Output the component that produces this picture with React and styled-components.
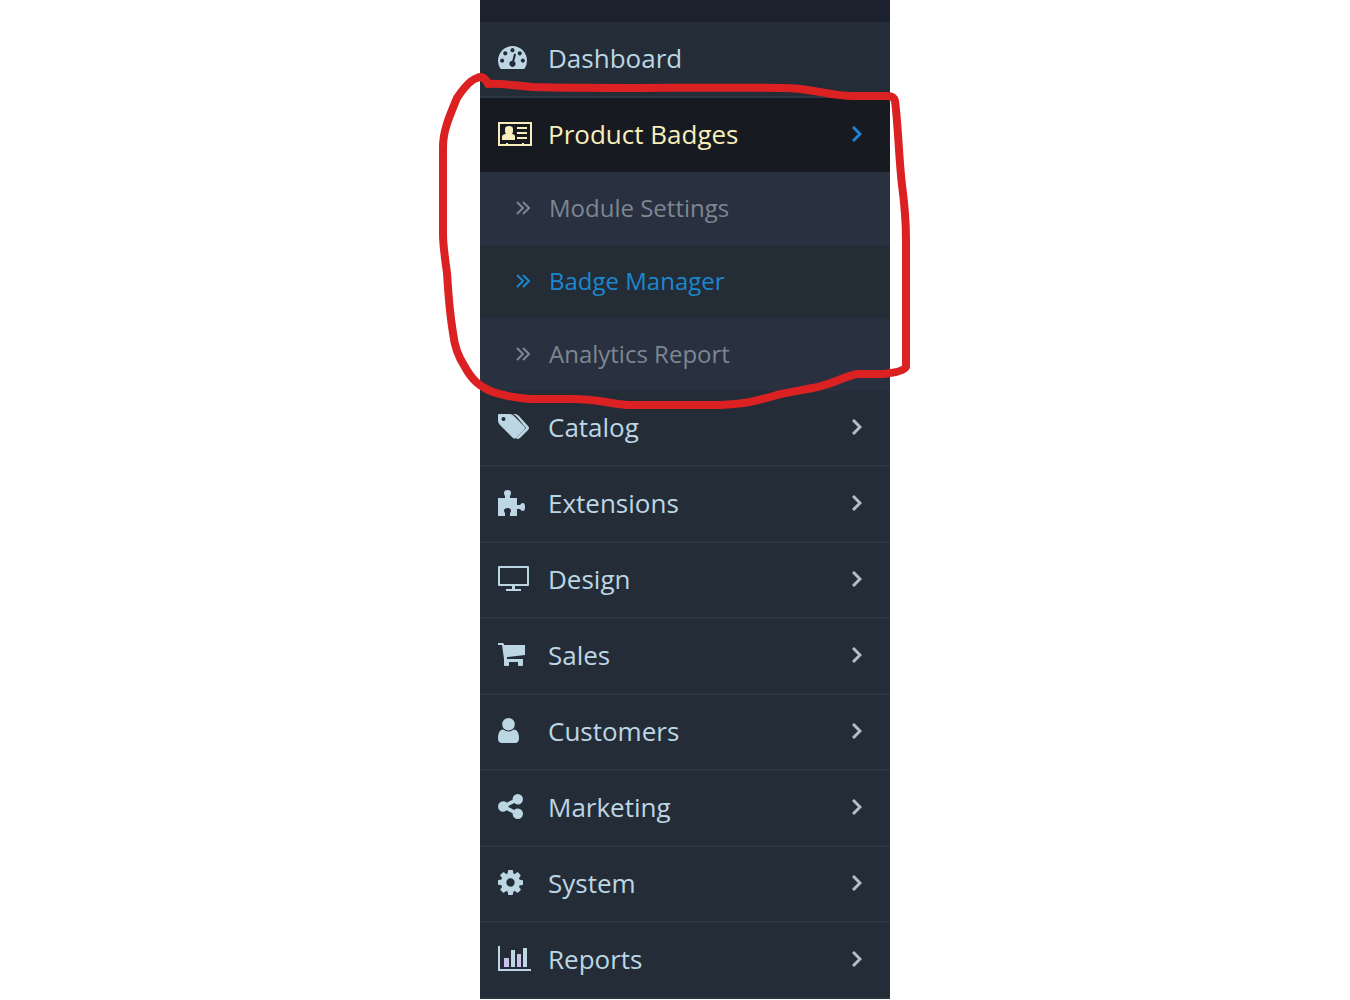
import React from 'react';
import styled, { createGlobalStyle } from 'styled-components';

const GlobalStyle = createGlobalStyle`
  * {
    box-sizing: border-box;
  }

  body {
    margin: 0;
    background: #ffffff;
    font-family: 'Open Sans', sans-serif;
  }
`;

// Icons
const icons = {
  dashboard: {
    box: '0 256 1792 1408',
    width: 29,
    height: 23,
    shape: (
      <path d="M384 1152q0-53-37.5-90.5t-90.5-37.5-90.5 37.5-37.5 90.5 37.5 90.5 90.5 37.5 90.5-37.5 37.5-90.5zm192-448q0-53-37.5-90.5t-90.5-37.5-90.5 37.5-37.5 90.5 37.5 90.5 90.5 37.5 90.5-37.5 37.5-90.5zm428 481l101-382q6-26-7.5-48.5t-38.5-29.5-48 6.5-30 39.5l-101 382q-60 5-107 43.5t-63 98.5q-20 77 20 146t117 89 146-20 89-117q16-60-6-117t-72-91zm660-33q0-53-37.5-90.5t-90.5-37.5-90.5 37.5-37.5 90.5 37.5 90.5 90.5 37.5 90.5-37.5 37.5-90.5zm-640-640q0-53-37.5-90.5t-90.5-37.5-90.5 37.5-37.5 90.5 37.5 90.5 90.5 37.5 90.5-37.5 37.5-90.5zm448 192q0-53-37.5-90.5t-90.5-37.5-90.5 37.5-37.5 90.5 37.5 90.5 90.5 37.5 90.5-37.5 37.5-90.5zm320 448q0 261-141 483-19 29-54 29h-1402q-35 0-54-29-141-221-141-483 0-182 71-348t191-286 286-191 348-71 348 71 286 191 191 286 71 348z" />
    ),
  },
  badge: {
    box: '0 0 34 26',
    width: 34,
    height: 26,
    shape: (
      <>
        <path fillRule="evenodd" d="M0 1h34v24H0zM2 3v20h6v-1h2v1h14v-1h2v1h6V3z" />
        <path d="M7 8q0-3 4-3t4 3v2q0 2-1 3 3 0 3 3v3H4v-3q0-3 4-3-1-1-1-3z" />
        <path d="M19 6h10v2H19zM19 11h10v2H19zM19 16h10v2H19z" />
      </>
    ),
  },
  catalog: {
    box: '0 0 31 25',
    width: 31,
    height: 25,
    shape: (
      <>
        <path fillRule="evenodd" d="M1 0h11q2 0 4 2l10 10q1 1 1 2t-1 2l-8 8q-1 1-3 0L2 11q-2-2-2-4V1q0-1 1-1zM5.500 3a2 2 0 1 0 0 4 2 2 0 1 0 0-4z" />
        <path d="M15 0h2q2 0 4 2l9 10q1 1 1 2t-1 2l-8 8q-1 1-3 1l-1-1 10-10L19 3q-2-2-4-3z" />
      </>
    ),
  },
  extensions: {
    box: '0 0 27 26',
    width: 27,
    height: 26,
    shape: (
      <path d="M0 8h7V6Q6 5 6 3q0-3 3.500-3T13 3q0 2-1 3v2h7v7h3q1-2 3-2 2 0 2 4t-2 4q-2 0-3-2h-3v7h-7v-3q1-1 1-2 0-3-3.500-3T6 21q0 1 1 2v3H0z" />
    ),
  },
  design: {
    box: '0 0 31 26',
    width: 31,
    height: 26,
    shape: (
      <path fillRule="evenodd" d="M1 0h29q1 0 1 1v18q0 1-1 1H17v3h6v2H8v-2h6v-3H1q-1 0-1-1V1q0-1 1-1zM2 2v16h27V2z" />
    ),
  },
  sales: {
    box: '0 0 27 23',
    width: 27,
    height: 23,
    shape: (
      <path d="M0 0h5q1 0 1 2h21v10L9 14v2h16v6q0 1-1 1h-3q-1 0-1-1v-3h-9v3q0 1-1 1H7q-1 0-1-1v-6L4 2H0z" />
    ),
  },
  customers: {
    box: '256 128 1280 1536',
    width: 21,
    height: 25,
    shape: (
      <path d="M1536 1399q0 109-62.500 187t-150.500 78h-854q-88 0-150.500-78t-62.500-187q0-85 8.500-160.500t31.500-152 58.500-131 94-89 134.500-34.500q131 128 313 128t313-128q76 0 134.500 34.500t94 89 58.500 131 31.500 152 8.500 160.500zm-256-887q0 159-112.500 271.500t-271.500 112.500-271.500-112.500-112.500-271.500 112.500-271.500 271.500-112.500 271.500 112.500 112.500 271.500z" />
    ),
  },
  marketing: {
    box: '128 128 1536 1536',
    width: 25,
    height: 25,
    shape: (
      <path d="M1344 1024q133 0 226.500 93.500t93.500 226.500-93.500 226.500-226.500 93.500-226.500-93.500-93.500-226.500q0-12 2-34l-360-180q-92 86-218 86-133 0-226.500-93.500t-93.500-226.500 93.500-226.500 226.500-93.500q126 0 218 86l360-180q-2-22-2-34 0-133 93.500-226.500t226.500-93.500 226.500 93.500 93.500 226.500-93.500 226.500-226.500 93.500q-126 0-218-86l-360 180q2 22 2 34t-2 34l360 180q92-86 218-86z" />
    ),
  },
  system: {
    box: '128 128 1536 1536',
    width: 25,
    height: 25,
    shape: (
      <path d="M1152 896q0-106-75-181t-181-75-181 75-75 181 75 181 181 75 181-75 75-181zm512-109v222q0 12-8 23t-20 13l-185 28q-19 54-39 91 35 50 107 138 10 12 10 25t-9 23q-27 37-99 108t-94 71q-12 0-26-9l-138-108q-44 23-91 38-16 136-29 186-7 28-36 28h-222q-14 0-24.500-8.500t-11.500-21.500l-28-184q-49-16-90-37l-141 107q-10 9-25 9-14 0-25-11-126-114-165-168-7-10-7-23 0-12 8-23 15-21 51-66.500t54-70.500q-27-50-41-99l-183-27q-13-2-21-12.500t-8-23.500v-222q0-12 8-23t19-13l186-28q14-46 39-92-40-57-107-138-10-12-10-24 0-10 9-23 26-36 98.500-107.500t94.500-71.500q13 0 26 10l138 107q44-23 91-38 16-136 29-186 7-28 36-28h222q14 0 24.500 8.500t11.500 21.500l28 184q49 16 90 37l142-107q9-9 24-9 13 0 25 10 129 119 165 170 7 8 7 22 0 12-8 23-15 21-51 66.500t-54 70.500q26 50 41 98l183 28q13 2 21 12.500t8 23.500z" />
    ),
  },
  reports: {
    box: '0 0 33 25',
    width: 33,
    height: 25,
    shape: (
      <>
        <path d="M0 0h2v23h31v2H0z" />
        <path fill="#c9c1ea" d="M6 12h5v9H6zM19 8h4v13h-4z" />
        <path d="M13 4h4v17h-4zM25 2h4v19h-4z" />
      </>
    ),
  },
};

const menu = [
  { label: 'Catalog', icon: 'catalog' },
  { label: 'Extensions', icon: 'extensions' },
  { label: 'Design', icon: 'design' },
  { label: 'Sales', icon: 'sales' },
  { label: 'Customers', icon: 'customers' },
  { label: 'Marketing', icon: 'marketing' },
  { label: 'System', icon: 'system' },
  { label: 'Reports', icon: 'reports' },
];

const submenu = [
  { label: 'Module Settings' },
  { label: 'Badge Manager', current: true },
  { label: 'Analytics Report' },
];

function Icon({ name }) {
  const { box, width, height, shape } = icons[name];
  return (
    <IconSlot>
      <svg viewBox={box} width={width} height={height} preserveAspectRatio="none" fill="currentColor" aria-hidden="true">
        {shape}
      </svg>
    </IconSlot>
  );
}

function Arrow() {
  return (
    <ArrowIcon viewBox="0 0 10 16" aria-hidden="true">
      <path d="M1 1l7 7-7 7" />
    </ArrowIcon>
  );
}

export default function App() {
  return (
    <Page>
      <GlobalStyle />
      <Sidebar>
        <TopStrip />
        <List>
          <li>
            <MenuLink href="#dashboard">
              <Icon name="dashboard" />
              <Label>Dashboard</Label>
            </MenuLink>
          </li>
          <li>
            <MenuLink href="#badges" $active>
              <Icon name="badge" />
              <Label>Product Badges</Label>
              <Arrow />
            </MenuLink>
            <List>
              {submenu.map((item) => (
                <li key={item.label}>
                  <SubLink href="#badges" $current={item.current}>
                    <DoubleArrow viewBox="0 0 14 14" aria-hidden="true">
                      <path d="M1 1l6 6-6 6M7 1l6 6-6 6" />
                    </DoubleArrow>
                    {item.label}
                  </SubLink>
                </li>
              ))}
            </List>
          </li>
          {menu.map((item) => (
            <li key={item.label}>
              <MenuLink href={`#${item.icon}`}>
                <Icon name={item.icon} />
                <Label>{item.label}</Label>
                <Arrow />
              </MenuLink>
            </li>
          ))}
        </List>
        {/* Hand-drawn loop around the Product Badges menu */}
        <Marker viewBox="430 60 490 360" aria-hidden="true">
          <path d="M488 84C503 83 515 86 533 87C610 89 700 87 783 88C812 88 830 96 853 96H887Q894 96 895 101C898 123 899 160 902 185Q906 215 906 240V367Q903 372 883 374H857C843 377 830 385 813 388C797 391 789 392 777 395C757 401 745 404 720 405H627C607 403 595 399 573 399H530Q507 397 493 392C480 387 472 380 465 367Q455 352 453 333C450 315 448 290 447 273Q443 245 443 235V147C443 130 450 115 457 98C463 89 470 80 477 78Q483 75 488 83" />
        </Marker>
      </Sidebar>
    </Page>
  );
}

// Styles
const Page = styled.main`
  display: flex;
  justify-content: center;
  padding-left: 20px;
`;

const Sidebar = styled.nav`
  position: relative;
  width: 100%;
  max-width: 410px;
  background: #242d37;
`;

const TopStrip = styled.div`
  height: 22px;
  background: #1b222e;
`;

const List = styled.ul`
  list-style: none;
  margin: 0;
  padding: 0;
`;

const MenuLink = styled.a`
  display: flex;
  align-items: center;
  height: ${({ $active }) => ($active ? '74px' : '76px')};
  padding: 0 28px 3px 18px;
  border-bottom: ${({ $active }) => ($active ? 'none' : '2px solid #2d3640')};
  background: ${({ $active }) => ($active ? '#171a20' : '#242d37')};
  color: ${({ $active }) => ($active ? '#f8eebb' : '#bdd6e4')};
  font-size: 26px;
  line-height: 36px;
  text-decoration: none;

  > svg {
    color: ${({ $active }) => ($active ? '#1b83cf' : '#aebfcb')};
  }
`;

const IconSlot = styled.span`
  display: flex;
  align-items: center;
  width: 50px;
`;

const Label = styled.span`
  flex: 1;
`;

const ArrowIcon = styled.svg`
  width: 10px;
  height: 16px;
  fill: none;
  stroke: currentColor;
  stroke-width: 3;
`;

const SubLink = styled.a`
  display: flex;
  align-items: center;
  gap: 19px;
  height: 73px;
  padding: 0 0 1px 36px;
  background: ${({ $current }) => ($current ? '#242c36' : '#29303f')};
  color: ${({ $current }) => ($current ? '#1b87cf' : '#7d8793')};
  font-size: 24px;
  line-height: 34px;
  text-decoration: none;
`;

const DoubleArrow = styled.svg`
  width: 14px;
  height: 14px;
  fill: none;
  stroke: currentColor;
  stroke-width: 2;
`;

const Marker = styled.svg`
  position: absolute;
  top: 60px;
  left: -50px;
  width: 490px;
  height: 360px;
  fill: none;
  stroke: #dc2122;
  stroke-width: 8;
  stroke-linejoin: round;
  stroke-linecap: round;
  pointer-events: none;
`;
